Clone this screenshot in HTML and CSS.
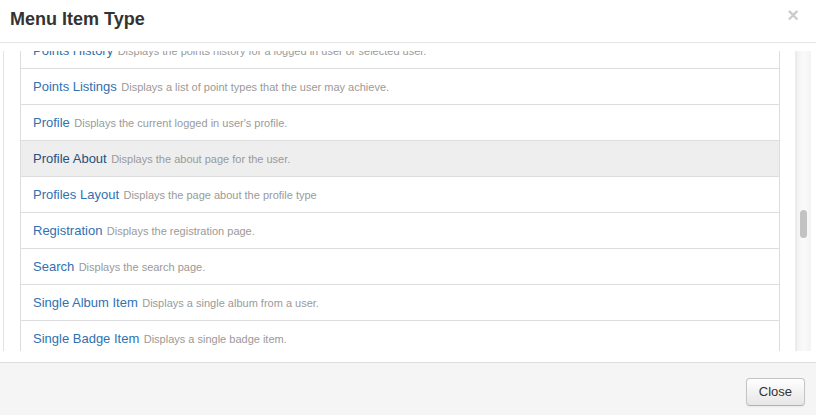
FILE: index.html
```html
<!DOCTYPE html>
<html>
<head>
<meta charset="utf-8">
<link rel="stylesheet" href="styles.css">
</head>
<body>
<div class="modal">
  <div class="modal-header">
    <h3 class="modal-title">Menu Item Type</h3>
    <button class="close" type="button">×</button>
  </div>
  <div class="modal-body">
    <div class="frame">
      <div class="viewport">
        <ul class="list">
          <li class="item"><a class="name">Points History</a> <span class="desc">Displays the points history for a logged in user or selected user.</span></li>
          <li class="item"><a class="name">Points Listings</a> <span class="desc">Displays a list of point types that the user may achieve.</span></li>
          <li class="item"><a class="name">Profile</a> <span class="desc">Displays the current logged in user's profile.</span></li>
          <li class="item active"><a class="name">Profile About</a> <span class="desc">Displays the about page for the user.</span></li>
          <li class="item"><a class="name">Profiles Layout</a> <span class="desc">Displays the page about the profile type</span></li>
          <li class="item"><a class="name">Registration</a> <span class="desc">Displays the registration page.</span></li>
          <li class="item"><a class="name">Search</a> <span class="desc">Displays the search page.</span></li>
          <li class="item"><a class="name">Single Album Item</a> <span class="desc">Displays a single album from a user.</span></li>
          <li class="item"><a class="name">Single Badge Item</a> <span class="desc">Displays a single badge item.</span></li>
        </ul>
      </div>
      <div class="scroll-track"><div class="scroll-thumb"></div></div>
    </div>
  </div>
  <div class="modal-footer">
    <button class="btn" type="button">Close</button>
  </div>
</div>
</body>
</html>
```
FILE: styles.css
```css
* { box-sizing: border-box; }
html, body { margin: 0; padding: 0; background: #fff; }
body {
  font-family: "Liberation Sans", Arial, sans-serif;
  color: #333;
  width: 816px;
  height: 415px;
  overflow: hidden;
}
.modal {
  display: flex;
  flex-direction: column;
  height: 415px;
}
.modal-header {
  height: 43px;
  border-bottom: 1px solid #e5e5e5;
  display: flex;
  justify-content: space-between;
  align-items: flex-start;
  padding: 0 17px 0 10px;
}
.modal-title {
  margin: 0;
  padding-top: 9px;
  font-size: 18px;
  line-height: 20px;
  font-weight: bold;
  color: #333;
}
.close {
  margin-top: 5px;
  padding: 0;
  border: 0;
  background: transparent;
  font-family: "Liberation Sans", Arial, sans-serif;
  font-size: 20px;
  line-height: 20px;
  font-weight: bold;
  color: #000;
  opacity: 0.2;
}
.modal-body {
  padding: 8px 5px 11px 3px;
  flex: 1;
}
.frame {
  height: 300px;
  display: flex;
  border-left: 1px solid #e3e3e3;
}
.viewport {
  flex: 1;
  overflow: hidden;
  padding: 0 15px 0 16px;
}
.list {
  list-style: none;
  margin: -19px 0 0 0;
  padding: 0;
  border-left: 1px solid #ddd;
  border-right: 1px solid #ddd;
}
.item {
  border-top: 1px solid #ddd;
  padding: 7px 12px 9px;
  line-height: 19px;
  height: 36px;
  white-space: nowrap;
}
.item.active { background: #eeeeee; }
.name {
  font-size: 13px;
  color: #3071b0;
  text-decoration: none;
}
.item.active .name { color: #25507f; }
.desc {
  font-size: 11px;
  color: #9a9a9a;
}
.scroll-track {
  width: 16px;
  background: linear-gradient(to right, #e9e9e9 0, #f4f4f4 2px, #fafafa 50%, #f3f3f3 100%);
  border-left: 1px solid #ececec;
}
.scroll-thumb {
  margin: 159px 0 0 4px;
  width: 7px;
  height: 28px;
  border-radius: 4px;
  background: #c2c2c2;
}
.modal-footer {
  height: 53px;
  background: #f5f5f5;
  border-top: 1px solid #ddd;
  padding: 15px 11px 0 15px;
  display: flex;
  justify-content: flex-end;
  align-items: flex-start;
}
.btn {
  font-family: "Liberation Sans", Arial, sans-serif;
  font-size: 13px;
  line-height: 18px;
  padding: 4px 12px;
  color: #333;
  border: 1px solid #c5c5c5;
  border-bottom-color: #b3b3b3;
  border-radius: 4px;
  background: linear-gradient(#ffffff, #e6e6e6);
  box-shadow: inset 0 1px 0 rgba(255,255,255,0.2), 0 1px 2px rgba(0,0,0,0.05);
}
```
